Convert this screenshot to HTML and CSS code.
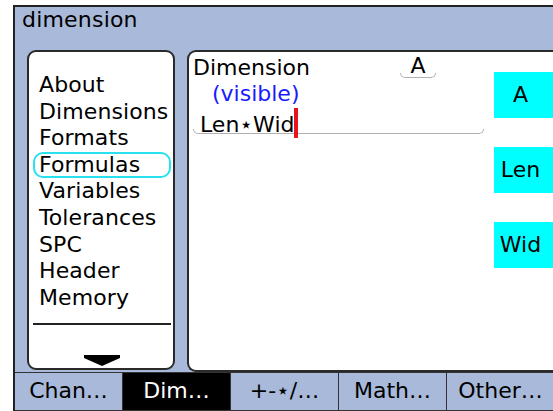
FILE: index.html
```html
<!DOCTYPE html>
<html lang="en">
<head>
  <meta charset="UTF-8">
  <title>dimension</title>
  <link rel="stylesheet" href="styles.css">
</head>
<body>
  <div class="device">
    <div class="titlebar">dimension</div>

    <div class="main">
      <div class="menu">
        <ul class="items">
          <li>About</li>
          <li>Dimensions</li>
          <li>Formats</li>
          <li class="current">Formulas</li>
          <li>Variables</li>
          <li>Tolerances</li>
          <li>SPC</li>
          <li>Header</li>
          <li>Memory</li>
        </ul>
        <div class="sep"></div>
        <div class="more">
          <svg width="36" height="12" viewBox="0 0 36 12">
            <polygon points="0,0 36,0 36,3 18,11 0,3" fill="#000"/>
          </svg>
        </div>
      </div>

      <div class="editor">
        <div class="formula">
          <div class="fhead">
            <span class="fname">Dimension</span>
            <div class="fslot">
              <div class="slottext">A</div>
              <div class="hook"></div>
            </div>
          </div>
          <div class="fvis">(visible)</div>
          <div class="fexpr">
            <div class="exprtext">Len⋆Wid<span class="caret"></span></div>
            <div class="hook"></div>
          </div>
        </div>
        <div class="vars">
          <div class="var">A</div>
          <div class="var">Len</div>
          <div class="var">Wid</div>
        </div>
      </div>
    </div>

    <div class="tabs">
      <div class="tab">Chan…</div>
      <div class="tab active">Dim…</div>
      <div class="tab">+-⋆/…</div>
      <div class="tab">Math…</div>
      <div class="tab">Other…</div>
    </div>
  </div>
</body>
</html>
```

FILE: styles.css
```css
html, body {
  margin: 0;
  background: #fff;
  overflow: hidden;
}
body {
  font-family: "DejaVu Sans", Verdana, sans-serif;
  font-size: 22px;
  color: #000;
}
.device {
  margin: 5px 0 0 13px;
  width: 540px;
  height: 406px;
  background: #a9b9d9;
  border-left: 2px solid #222;
  border-top: 2px solid #222;
  box-sizing: border-box;
  display: flex;
  flex-direction: column;
}
.titlebar {
  height: 43px;
  line-height: 26px;
  padding-left: 7px;
  letter-spacing: 0.2px;
}
.main {
  height: 322px;
  display: flex;
}
.menu {
  width: 148px;
  height: 320px;
  margin-left: 12px;
  background: #fff;
  border: 2px solid #2a2a2a;
  border-radius: 9px;
  box-sizing: border-box;
  padding: 20px 2px 0 4px;
}
.items {
  list-style: none;
  margin: 0;
  padding: 0;
}
.items li {
  line-height: 22.6px;
  border: 2px solid transparent;
  border-radius: 10px;
  padding-left: 4px;
  white-space: nowrap;
  letter-spacing: 0.1px;
}
.items li.current {
  border-color: #27e2ee;
}
.sep {
  height: 2px;
  background: #222;
  margin: 12px 0 0 0;
}
.more {
  display: flex;
  justify-content: center;
  margin-top: 30px;
}
.editor {
  flex: 1;
  margin-left: 12px;
  background: #fff;
  border: 2px solid #2a2a2a;
  border-right: none;
  border-radius: 9px 0 0 9px;
  display: flex;
}
.formula {
  flex: 1;
  padding: 3px 10px 0 4px;
}
.fhead {
  display: flex;
  align-items: flex-start;
  line-height: 26px;
}
.fslot {
  width: 36px;
  margin: 2px 0 0 90px;
  text-align: center;
}
.slottext {
  line-height: 18px;
}
.hook {
  height: 4px;
  margin-top: -2px;
  border: 1px solid #b0b0b0;
  border-top: none;
  border-radius: 0 0 7px 7px;
}
.fvis {
  color: #1a1aff;
  line-height: 26px;
  padding-left: 19px;
}
.exprtext {
  height: 20px;
  padding-top: 4px;
  padding-left: 7px;
  line-height: 27px;
  display: flex;
  align-items: flex-start;
}
.caret {
  width: 4px;
  height: 30px;
  background: #e8141c;
  margin-top: -3px;
}
.vars {
  width: 59px;
  padding-top: 20px;
  display: flex;
  flex-direction: column;
  gap: 29px;
}
.var {
  height: 46px;
  line-height: 46px;
  background: #00ffff;
  text-align: center;
  padding-right: 6px;
}
.tabs {
  flex: 1;
  display: grid;
  grid-template-columns: repeat(5, 108px);
  border-top: 1px solid #333;
  border-bottom: 1px solid #333;
}
.tab {
  line-height: 36px;
  text-align: center;
  border-right: 1.5px solid #333;
  white-space: nowrap;
}
.tab.active {
  background: #000;
  color: #fff;
}
```
